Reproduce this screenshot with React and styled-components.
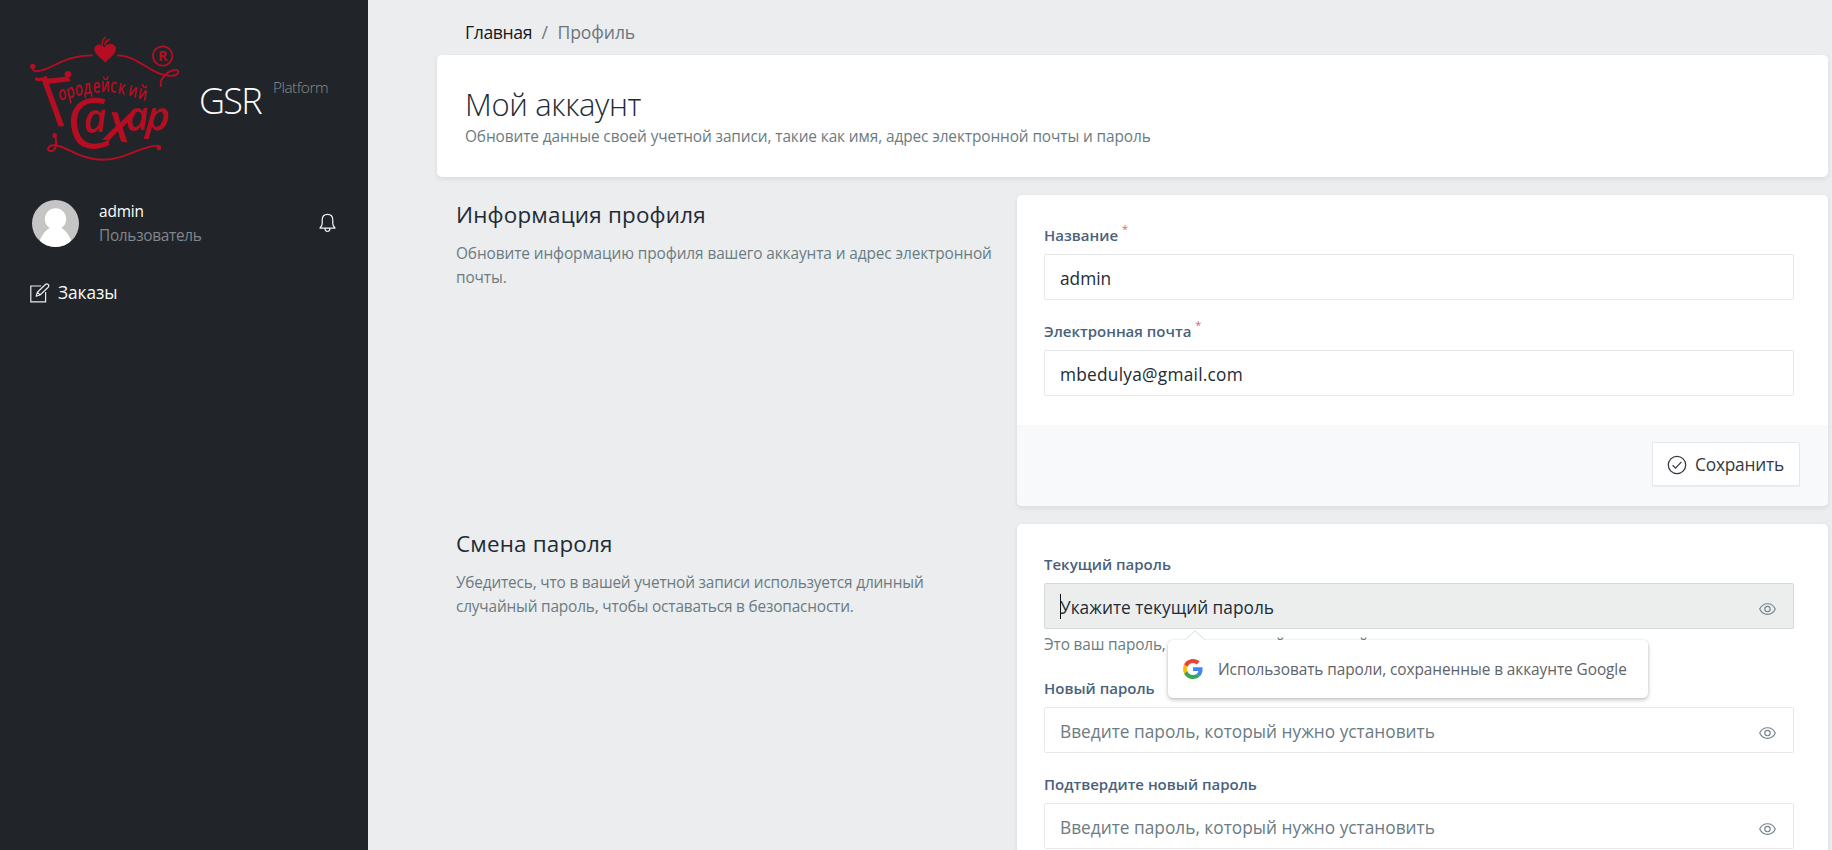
import React from "react";
import styled, { createGlobalStyle, css } from "styled-components";

const GlobalStyle = createGlobalStyle`
  * { box-sizing: border-box; }
  body {
    margin: 0;
    background: #ecedef;
    color: #212b36;
    font-family: "Open Sans", "Noto Sans", sans-serif;
    font-size: 17.3px;
  }
  #root { height: 850px; overflow: hidden; }
`;

const Page = styled.div`
  display: grid;
  grid-template-columns: 368px 1fr;
  height: 850px;
  overflow: hidden;
`;

/* ---------- sidebar ---------- */

const Sidebar = styled.aside`
  background: #212529;
  height: 850px;
  padding-top: 30px;
`;

const Brand = styled.div`
  display: flex;
  align-items: flex-start;
  height: 136px;
  padding-left: 24px;
`;

const BrandName = styled.span`
  margin: 46px 0 0 15px;
  color: #fff;
  font-size: 36px;
  font-weight: 300;
  line-height: 50px;
  letter-spacing: -1.7px;
`;

const BrandSuffix = styled.span`
  margin: 46px 0 0 12px;
  color: #8a8d90;
  font-size: 15.4px;
  font-weight: 350;
  line-height: 24px;
  letter-spacing: -0.5px;
`;

const Profile = styled.div`
  display: flex;
  align-items: center;
  height: 48px;
  margin-top: 33px;
  padding: 0 32px;
`;

const ProfileText = styled.div`
  flex: 1;
  margin-left: 20px;
  padding-top: 2px;
  font-size: 15.4px;
  line-height: 24px;
`;

const UserName = styled.div`
  color: #fff;
  font-weight: 500;
  letter-spacing: -0.15px;
`;

const UserRole = styled.div`
  color: #80868b;
  letter-spacing: -0.3px;
`;

const NavItem = styled.a`
  display: flex;
  align-items: center;
  gap: 8px;
  height: 26px;
  margin-top: 33px;
  padding-left: 30px;
  color: #f8f9fa;
  letter-spacing: -0.05px;
  line-height: 26px;
`;

/* ---------- main column ---------- */

const Main = styled.main`
  padding: 0 4px 0 69px;
`;

const Breadcrumb = styled.nav`
  display: flex;
  gap: 9.5px;
  height: 55px;
  padding: 20px 0 0 28px;
  color: #6c757d;
  font-size: 17.6px;
  line-height: 25px;
  letter-spacing: -0.1px;
`;

const Crumb = styled.a`
  color: #14181c;
  letter-spacing: -0.38px;
`;

const cardBox = css`
  background: #fff;
  border-radius: 5px;
  box-shadow: 0 2px 5px rgba(33, 37, 41, 0.09);
`;

const HeaderCard = styled.header`
  ${cardBox}
  height: 122px;
  padding: 31px 28px 0;
`;

const Title = styled.h1`
  margin: 0;
  font-size: 31px;
  font-weight: 300;
  line-height: 36px;
  letter-spacing: -0.35px;
`;

const Note = styled.p`
  margin: ${(p) => p.$top || 0}px 0 0;
  color: #6a7c82;
  font-size: 15.4px;
  line-height: 24.2px;
  letter-spacing: ${(p) => p.$tracking || -0.1}px;
`;

const Section = styled.section`
  display: grid;
  grid-template-columns: 580px 1fr;
  margin-top: 18px;
`;

const SectionIntro = styled.div`
  padding: 6px 14px 0 19px;
`;

const SectionTitle = styled.h2`
  margin: 0;
  font-size: 22.4px;
  font-weight: 400;
  line-height: 28px;
  letter-spacing: 0.2px;
`;

const Card = styled.div`
  ${cardBox}
  overflow: visible;
`;

const CardBody = styled.div`
  display: flex;
  flex-direction: column;
  gap: 20px;
  padding: 29px 34px 29px 27px;
`;

const CardFooter = styled.div`
  display: flex;
  justify-content: flex-end;
  align-items: flex-start;
  height: 81px;
  padding: 17px 28px 0;
  background: #f8f9fb;
  border-radius: 0 0 5px 5px;
`;

const SaveButton = styled.button`
  display: flex;
  align-items: center;
  gap: 8px;
  width: 148px;
  height: 44px;
  padding: 1px 0 0 14px;
  border: 1px solid #e5e7ea;
  border-radius: 2px;
  background: #fff;
  box-shadow: 0 1px 1px rgba(33, 37, 41, 0.06);
  color: #343a40;
  font: inherit;
  letter-spacing: -0.2px;
`;

const Field = styled.div`
  position: relative;
`;

const Label = styled.label`
  display: block;
  height: 30px;
  color: #4a617d;
  font-size: 15px;
  font-weight: 600;
  line-height: 23px;
`;

const Required = styled.sup`
  margin-left: 4px;
  color: #e0665c;
  font-size: 11px;
  font-weight: 400;
  line-height: 0;
  vertical-align: 8px;
`;

const Control = styled.div`
  display: flex;
  align-items: center;
  height: 46px;
  padding: 0 17px 0 15px;
  border: 1px solid ${(p) => (p.$active ? "#d5d9d9" : "#e6e8e9")};
  border-radius: 2px;
  background: ${(p) => (p.$active ? "#eceeee" : "#fff")};
  color: #212b36;
  svg { position: relative; top: 2.5px; }
`;

const Input = styled.input`
  flex: 1;
  height: 44px;
  padding: 2px 0 0;
  border: 0;
  outline: 0;
  background: transparent;
  color: inherit;
  font: inherit;
  letter-spacing: ${(p) => p.$tracking || 0}px;
  &::placeholder {
    color: ${(p) => (p.$active ? "#212b36" : "#6a7c82")};
    opacity: 1;
  }
`;

const Caret = styled.span`
  position: absolute;
  left: 16px;
  top: 41px;
  width: 1px;
  height: 25px;
  background: #111;
`;

const Popup = styled.div`
  position: absolute;
  z-index: 2;
  left: 124px;
  top: 87px;
  display: flex;
  align-items: center;
  gap: 15px;
  width: 480px;
  height: 58px;
  padding-left: 15px;
  border-radius: 5px;
  background: #fff;
  box-shadow: 0 2px 4px rgba(0, 0, 0, 0.24), 0 0 2px rgba(0, 0, 0, 0.1);
  color: #5f6368;
  font-size: 15.4px;
  letter-spacing: -0.07px;
  white-space: nowrap;
`;

const PopupArrow = styled.svg`
  position: absolute;
  left: 16px;
  top: -10px;
`;

/* ---------- drawings ---------- */

const LETTERS = {
  x: [108, 131, 155, 179, 207, 230, 257, 280, 311, 340].map((v) => v / 0.66).join(" "),
  y: "216 209 200 194 190 187 186 189 195 203",
  rotate: "-22 -18 -12 -8 -4 0 6 12 14 16",
};

const Logo = () => (
  <svg width="160" height="136" viewBox="0 0 480 408" fill="#b50d22" fontFamily="Open Sans, Noto Sans, sans-serif">
    <path d="M244 98C236 88 212 75 211 58C211 43 232 37 241 52C250 37 276 39 276 57C275 74 253 87 244 98Z" />
    <g fill="none" stroke="#b50d22" strokeLinecap="round">
      <path strokeWidth="5" d="M235 42Q235 28 244 22M243 43Q245 32 256 29" />
      <path strokeWidth="5.5" d="M28 112C22 132 52 122 70 115C110 98 146 75 204 76" />
      <path strokeWidth="5.5" d="M282 76C320 76 348 100 388 122C424 142 462 142 463 125C460 113 432 123 422 137C410 150 408 155 411 168" />
      <path strokeWidth="6" d="M92 313C100 334 98 362 82 364C64 361 72 344 94 346C128 350 170 389 235 389C310 389 350 346 402 347Q414 348 405 357" />
      <circle cx="416" cy="78" r="29" strokeWidth="5.5" />
      <path strokeWidth="9" d="M37 147Q50 152 66 143" />
    </g>
    <circle cx="26" cy="109" r="8" />
    <circle cx="405" cy="354" r="7" />
    <circle cx="92" cy="317" r="7" />
    <circle cx="132" cy="133" r="10" />
    <text x="402" y="94" fontSize="43" fontWeight="700">R</text>
    <text transform="translate(84 292) rotate(-6) skewX(14)" fontSize="205" fontWeight="400">Г</text>
    <g transform="scale(.66 1)">
      <text x={LETTERS.x} y={LETTERS.y} rotate={LETTERS.rotate} fontSize="60" fontWeight="600">ородейский</text>
    </g>
    <text transform="translate(138 364) rotate(-7)" fontSize="208" fontWeight="500">С</text>
    <text x="180 241 306 364" y="309 330 303 298" rotate="-4 6 -4 4" fontSize="120" fontStyle="italic" fontWeight="600">
      а<tspan fontSize="160">х</tspan>ар
    </text>
  </svg>
);

const Avatar = () => (
  <svg width="47" height="47" viewBox="0 0 47 47">
    <defs>
      <clipPath id="avatarClip"><circle cx="23.5" cy="23.5" r="23.5" /></clipPath>
    </defs>
    <g clipPath="url(#avatarClip)">
      <rect width="47" height="47" fill="#c5c5c5" />
      <circle cx="23.5" cy="19" r="10.7" fill="#fff" />
      <path d="M6 47C8 36 14 29 19 27.5H28C33 29 39 36 41 47Z" fill="#fff" />
    </g>
  </svg>
);

const BellIcon = () => (
  <svg width="17" height="20" viewBox="0 0 18 20" fill="none" stroke="#f1f2f3" strokeWidth="1.3" strokeLinejoin="round">
    <path d="M3.4 10.5V7C3.4 3.2 5.6.9 9 .9S14.6 3.2 14.6 7V10.5C14.6 12.8 16 14.2 17 15.4H1C2 14.2 3.4 12.8 3.4 10.5Z" />
    <path d="M6.4 15.6C6.4 17.8 7.4 19 9 19S11.6 17.8 11.6 15.6" />
  </svg>
);

const EditIcon = () => (
  <svg width="20" height="20" viewBox="0 0 20 20" fill="none" stroke="#e9ebec" strokeWidth="1.2">
    <path d="M11.2 3H.8V18.8H15.6V9" />
    <path d="M6.2 13.2L7.4 9.2L15.4 1.5Q16.8.4 18.2 1.5Q19.4 2.8 18.2 4.2L10 12ZM7.4 9.2L10 12" strokeLinejoin="round" />
  </svg>
);

const CheckIcon = () => (
  <svg width="20" height="20" viewBox="0 0 20 20" fill="none" stroke="#343a40" strokeWidth="1.25">
    <circle cx="10" cy="10" r="8.7" />
    <path d="M5.6 10.3L8.6 13.2L14.4 6.9" />
  </svg>
);

const EyeIcon = () => (
  <svg width="17" height="12" viewBox="0 0 17 12" fill="none" stroke="#74828a" strokeWidth="1.15">
    <path d="M.7 6C2.4 2.4 5.2.7 8.5.7S14.6 2.4 16.3 6C14.6 9.6 11.8 11.3 8.5 11.3S2.4 9.6.7 6Z" />
    <circle cx="8.5" cy="6" r="2.7" />
  </svg>
);

const GoogleIcon = () => (
  <svg width="20" height="20" viewBox="0 0 48 48">
    <path fill="#EA4335" d="M24 9.5c3.54 0 6.71 1.22 9.21 3.6l6.85-6.85C35.9 2.38 30.47 0 24 0 14.62 0 6.51 5.38 2.56 13.22l7.98 6.19C12.43 13.72 17.74 9.5 24 9.5z" />
    <path fill="#4285F4" d="M46.98 24.55c0-1.57-.15-3.09-.38-4.55H24v9.02h12.94c-.58 2.96-2.26 5.48-4.78 7.18l7.73 6c4.51-4.18 7.09-10.36 7.09-17.65z" />
    <path fill="#FBBC05" d="M10.53 28.59c-.48-1.45-.76-2.99-.76-4.59s.27-3.14.76-4.59l-7.98-6.19C.92 16.46 0 20.12 0 24c0 3.88.92 7.54 2.56 10.78l7.97-6.19z" />
    <path fill="#34A853" d="M24 48c6.48 0 11.93-2.13 15.89-5.81l-7.73-6c-2.15 1.45-4.92 2.3-8.16 2.3-6.26 0-11.57-4.22-13.47-9.91l-7.98 6.19C6.51 42.62 14.62 48 24 48z" />
  </svg>
);

/* ---------- fields ---------- */

const TextField = ({ label, value, tracking }) => (
  <Field>
    <Label>{label}<Required>*</Required></Label>
    <Control>
      <Input defaultValue={value} $tracking={tracking} />
    </Control>
  </Field>
);

const PasswordField = ({ label, placeholder, active, children }) => (
  <Field>
    <Label>{label}</Label>
    <Control $active={active}>
      <Input type="password" placeholder={placeholder} $active={active} />
      <EyeIcon />
    </Control>
    {children}
  </Field>
);

export default function App() {
  return (
    <Page>
      <GlobalStyle />
      <Sidebar>
        <Brand>
          <Logo />
          <BrandName>GSR</BrandName>
          <BrandSuffix>Platform</BrandSuffix>
        </Brand>
        <Profile>
          <Avatar />
          <ProfileText>
            <UserName>admin</UserName>
            <UserRole>Пользователь</UserRole>
          </ProfileText>
          <BellIcon />
        </Profile>
        <NavItem><EditIcon />Заказы</NavItem>
      </Sidebar>
      <Main>
        <Breadcrumb><Crumb>Главная</Crumb><span>/</span><span>Профиль</span></Breadcrumb>
        <HeaderCard>
          <Title>Мой аккаунт</Title>
          <Note $top={3}>Обновите данные своей учетной записи, такие как имя, адрес электронной почты и пароль</Note>
        </HeaderCard>
        <Section>
          <SectionIntro>
            <SectionTitle>Информация профиля</SectionTitle>
            <Note $top={13}>Обновите информацию профиля вашего аккаунта и адрес электронной почты.</Note>
          </SectionIntro>
          <Card>
            <CardBody>
              <TextField label="Название" value="admin" />
              <TextField label="Электронная почта" value="mbedulya@gmail.com" tracking={0.25} />
            </CardBody>
            <CardFooter>
              <SaveButton><CheckIcon />Сохранить</SaveButton>
            </CardFooter>
          </Card>
        </Section>
        <Section>
          <SectionIntro>
            <SectionTitle>Смена пароля</SectionTitle>
            <Note $top={13} $tracking={-0.18}>Убедитесь, что в вашей учетной записи используется длинный случайный пароль, чтобы оставаться в безопасности.</Note>
          </SectionIntro>
          <Card>
            <CardBody>
              <PasswordField label="Текущий пароль" placeholder="Укажите текущий пароль" active>
                <Caret />
                <Note $top={4} $tracking={-0.15}>Это ваш пароль, установленный на данный момент.</Note>
                <Popup>
                  <PopupArrow width="22" height="11" viewBox="0 0 22 11">
                    <path d="M0 11L11 .8L22 11Z" fill="#fff" />
                    <path d="M1 10L11 .8L21 10" fill="none" stroke="#d9dbdc" strokeWidth="1" />
                  </PopupArrow>
                  <GoogleIcon />
                  Использовать пароли, сохраненные в аккаунте Google
                </Popup>
              </PasswordField>
              <PasswordField label="Новый пароль" placeholder="Введите пароль, который нужно установить" />
              <PasswordField label="Подтвердите новый пароль" placeholder="Введите пароль, который нужно установить" />
            </CardBody>
          </Card>
        </Section>
      </Main>
    </Page>
  );
}
